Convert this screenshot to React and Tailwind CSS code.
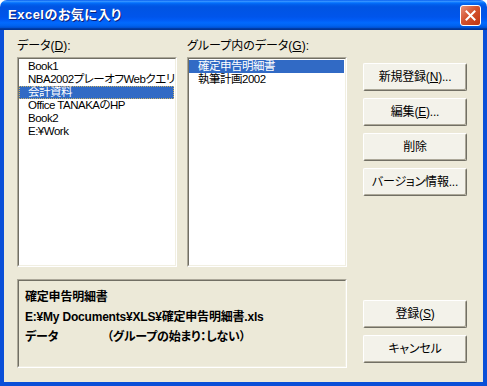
import React from 'react';

const font = "font-['Liberation_Sans','Noto_Sans_CJK_JP',sans-serif] [font-feature-settings:'palt']";

// classic sunken border: grey/dark outside top-left, light bottom-right
const Inset = ({ className, children }) => (
  <div className={`border border-t-[#aca899] border-l-[#aca899] border-b-white border-r-white ${className}`}>
    <div className="h-full border border-t-[#716f64] border-l-[#716f64] border-b-[#f1efe2] border-r-[#f1efe2]">
      {children}
    </div>
  </div>
);

const Btn = ({ children }) => (
  <button className="w-[104px] h-[28px] bg-[#f3f2ea] rounded-[2px] border border-t-white border-l-white border-r-[#716f64] border-b-[#716f64] shadow-[inset_-1px_-1px_0_#aca899] text-[12px] leading-[14px] tracking-[-0.2px] text-black flex items-center justify-center">
    {children}
  </button>
);

const Item = ({ text, selected, focus }) => (
  <div
    className={`h-[13px] leading-[13px] pl-[9px] text-[11.5px] tracking-[-0.5px] whitespace-nowrap ${
      selected ? 'bg-[#316ac5] text-white' : 'text-black'
    } ${focus ? 'outline-1 outline-dotted outline-[#c9b26a] -outline-offset-1' : ''}`}
  >
    {text}
  </div>
);

const dataItems = ['Book1', 'NBA2002プレーオフWebクエリ', '会計資料', 'Office TANAKAのHP', 'Book2', 'E:¥Work'];
const groupItems = ['確定申告明細書', '執筆計画2002'];

export default function App() {
  return (
    <div className={`w-[487px] h-[386px] flex flex-col ${font}`}>
      {/* title bar */}
      <div className="h-[30px] shrink-0 rounded-t-[7px] flex items-center justify-between pl-[8px] pr-[6px] bg-[linear-gradient(to_bottom,#0058ee_0%,#3a93ff_4%,#288eff_6%,#127dff_8%,#036ffc_10%,#0262ee_14%,#0057e5_20%,#0054e3_24%,#0055eb_56%,#005bf5_66%,#026afe_76%,#0062ef_86%,#0052d6_92%,#0040ab_94%,#003092_100%)]">
        <span className="text-white font-bold text-[13px] leading-[16px] tracking-[0.5px] [text-shadow:1px_1px_0_#0a1e7a]">
          Excelのお気に入り
        </span>
        <div className="w-[21px] h-[21px] rounded-[3px] border border-white bg-[linear-gradient(135deg,#e8917a_0%,#d4532f_45%,#c2350f_100%)] flex items-center justify-center">
          <svg width="11" height="11" viewBox="0 0 11 11">
            <path d="M1.5 1.5 L9.5 9.5 M9.5 1.5 L1.5 9.5" stroke="white" strokeWidth="2" strokeLinecap="square" />
          </svg>
        </div>
      </div>

      {/* body */}
      <div className="flex-1 flex bg-[#ece9d8] border-x-4 border-b-4 border-[#0a4fd8] pl-[13px] pr-[16px]">
        <div className="w-[330px] flex flex-col">
          <div className="h-[27px] pt-[9px] flex text-[12px] leading-[14px] text-black">
            <span className="w-[170px]">データ(<u>D</u>):</span>
            <span>グループ内のデータ(<u>G</u>):</span>
          </div>
          <div className="flex gap-[10px]">
            <Inset className="w-[160px] h-[210px]">
              <div className="h-full bg-white pt-[1px] pr-[1px]">
                {dataItems.map((t) => (
                  <Item key={t} text={t} selected={t === '会計資料'} focus={t === '会計資料'} />
                ))}
              </div>
            </Inset>
            <Inset className="w-[160px] h-[210px]">
              <div className="h-full bg-white pt-[1px] pr-[1px]">
                {groupItems.map((t, i) => (
                  <Item key={t} text={t} selected={i === 0} />
                ))}
              </div>
            </Inset>
          </div>
          <Inset className="mt-[12px] w-[330px] h-[89px]">
            <div className="pl-[6px] pt-[6px] text-[12px] leading-[20px] font-bold tracking-[-0.2px] text-black">
              <div>確定申告明細書</div>
              <div>E:¥My Documents¥XLS¥確定申告明細書.xls</div>
              <div className="flex">
                <span className="w-[82px]">データ</span>
                <span>（グループの始まり：しない）</span>
              </div>
            </div>
          </Inset>
        </div>

        <div className="ml-[16px] w-[104px] flex flex-col pt-[33px] pb-[19px]">
          <div className="flex flex-col gap-[7px]">
            <Btn>新規登録(<u>N</u>)...</Btn>
            <Btn>編集(<u>E</u>)...</Btn>
            <Btn>削除</Btn>
            <Btn>バージョン情報...</Btn>
          </div>
          <div className="mt-auto flex flex-col gap-[7px]">
            <Btn>登録(<u>S</u>)</Btn>
            <Btn>キャンセル</Btn>
          </div>
        </div>
      </div>
    </div>
  );
}
